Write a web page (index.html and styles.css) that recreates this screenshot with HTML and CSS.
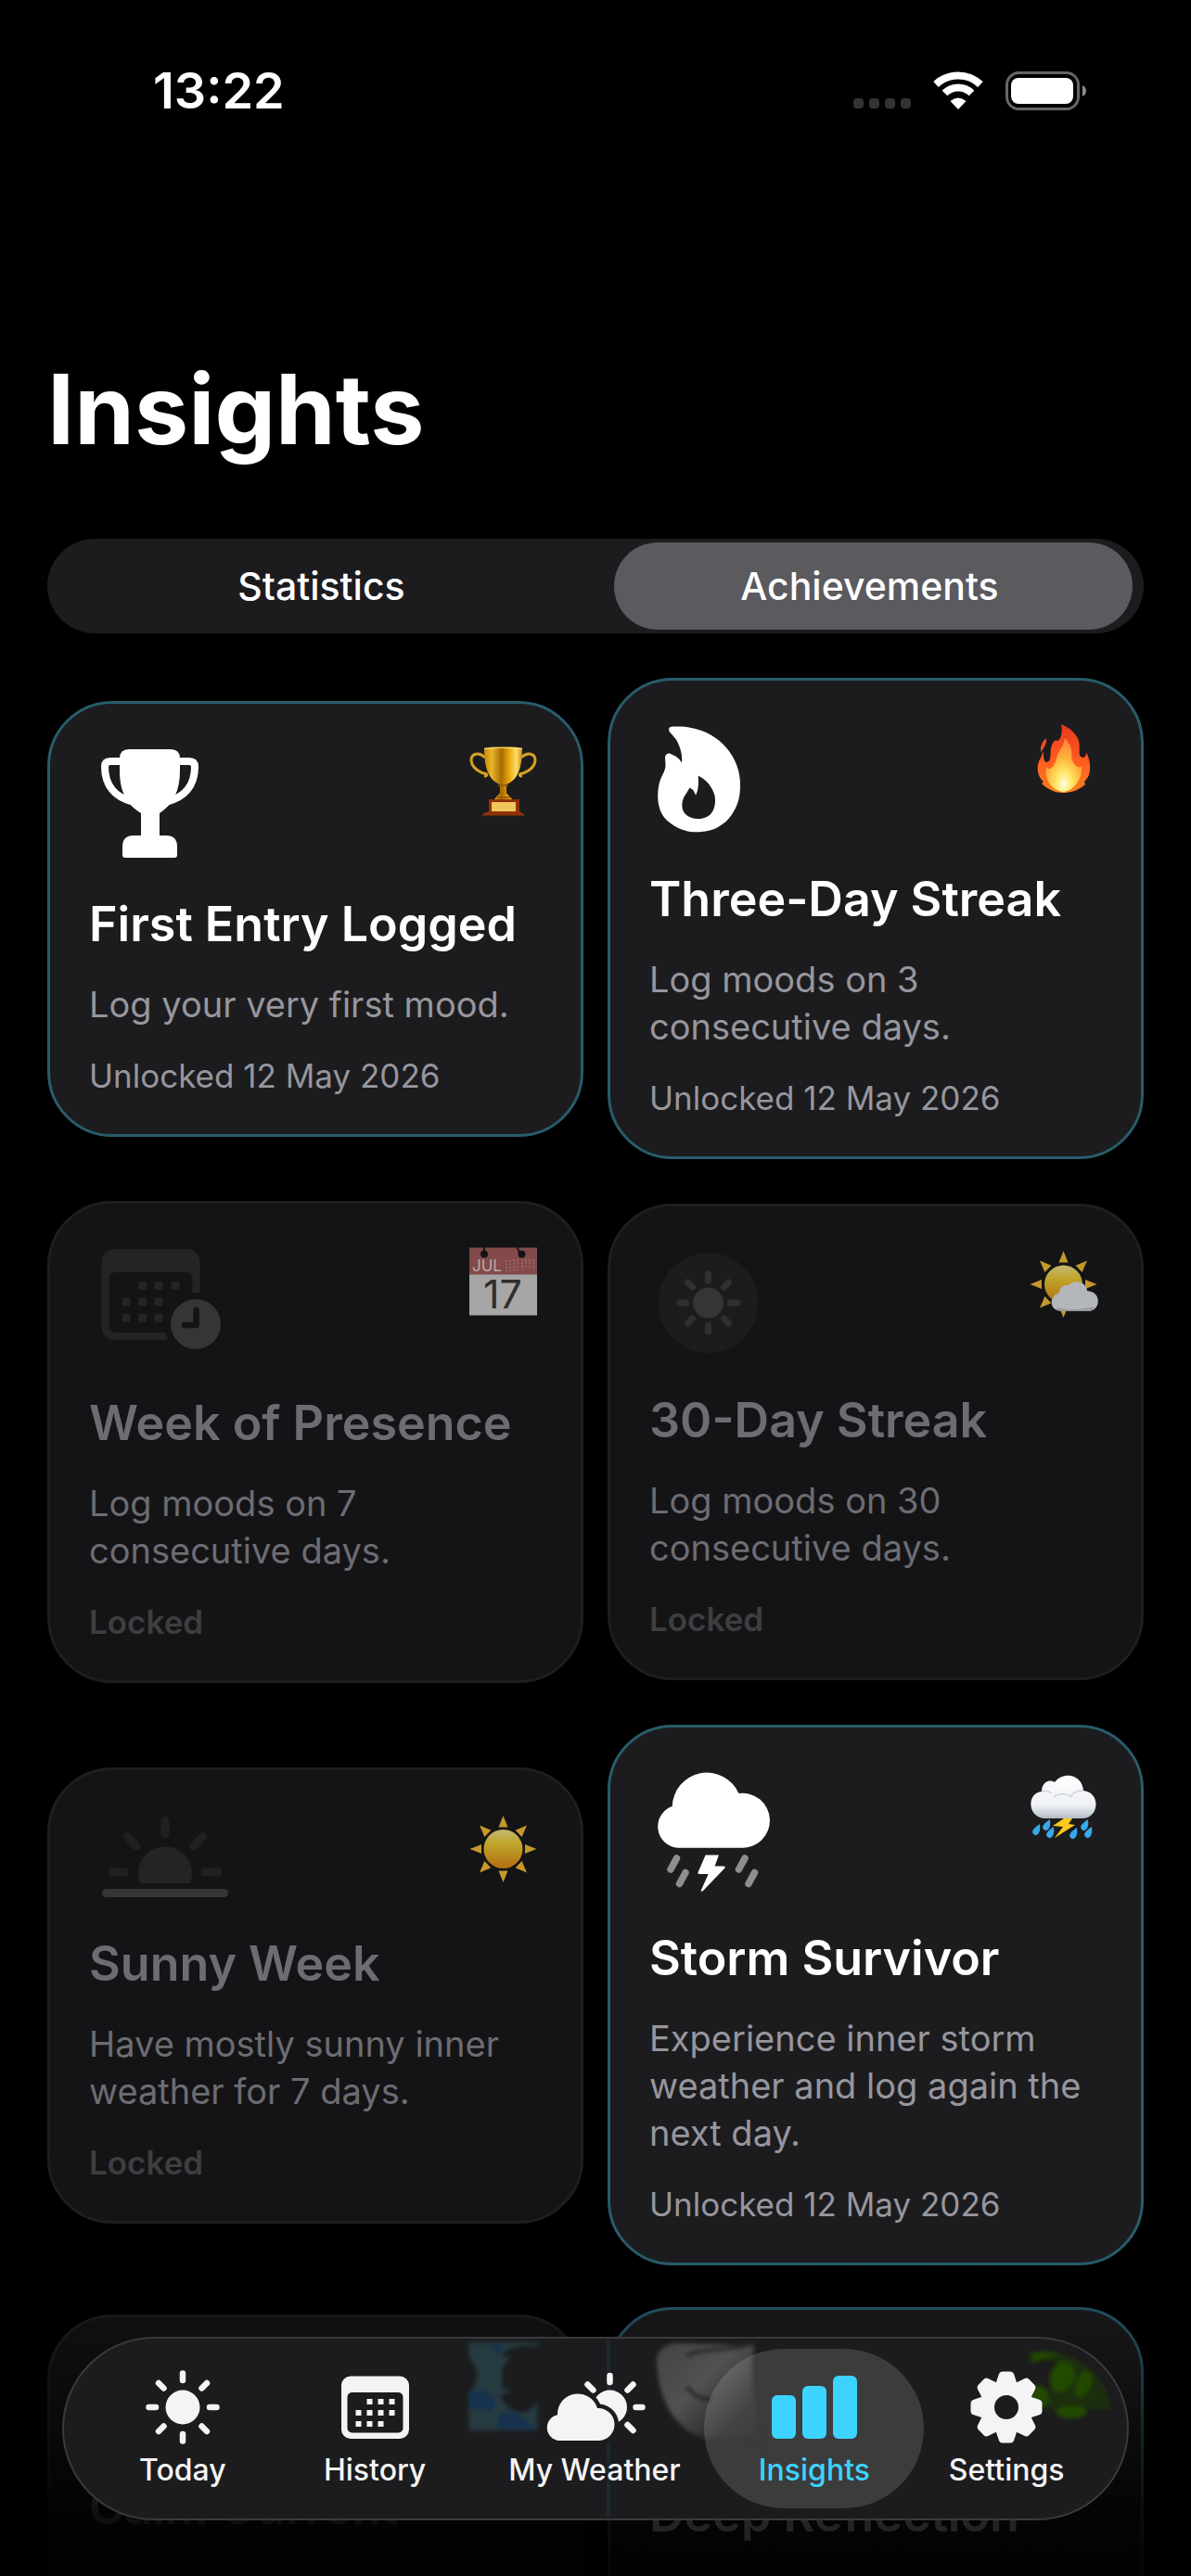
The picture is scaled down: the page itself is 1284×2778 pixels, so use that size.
FILE: index.html
```html
<!DOCTYPE html>
<html lang="en">
<head>
<meta charset="utf-8">
<meta name="viewport" content="width=device-width, initial-scale=1">
<title>Insights</title>
<link rel="stylesheet" href="styles.css">
</head>
<body>
<div class="app">
  <header class="status-bar">
    <time class="clock">13:22</time>
    <div class="status-icons">
      <svg width="62" height="42" viewBox="0 0 62 42" fill="#333"><rect x="0" y="29" width="11" height="11" rx="4"/><rect x="17" y="29" width="11" height="11" rx="4"/><rect x="34" y="29" width="11" height="11" rx="4"/><rect x="51" y="29" width="11" height="11" rx="4"/></svg>
      <svg width="54" height="42" viewBox="0 0 54 42"><path d="M3 14A35 35 0 0 1 51 14" fill="none" stroke="#fff" stroke-width="8"/><path d="M12.500 23.500A20.500 20.500 0 0 1 41.500 23.500" fill="none" stroke="#fff" stroke-width="8"/><path d="M27 41 18.500 32Q27 25 35.500 32Z" fill="#fff"/></svg>
      <svg width="88" height="42" viewBox="0 0 88 42"><rect x="1.500" y="1.500" width="77" height="39" rx="13" fill="none" stroke="#666" stroke-width="3"/><rect x="6" y="7" width="67" height="28" rx="8" fill="#fff"/><path d="M83 15Q87 17 87 21T83 27Z" fill="#8a8a8a"/></svg>
    </div>
  </header>

  <main class="content">
    <h1 class="page-title">Insights</h1>

    <div class="segmented" role="group" aria-label="Insights view">
      <button class="segment" type="button" aria-pressed="false">Statistics</button>
      <button class="segment segment-selected" type="button" aria-pressed="true">Achievements</button>
    </div>

    <section class="card-grid" aria-label="Achievements">
      <article class="card card-unlocked">
        <div class="card-top">
          <svg width="131" height="134" viewBox="0 0 131 134"><path fill="#fff" d="M33 17Q33 7 43 7H88Q98 7 98 17V30C98 52 91 66 76 76V100H83Q95 100 95 112V121Q95 124 92 124H39Q36 124 36 121V112Q36 100 48 100H56V76C40 66 33 52 33 30Z"/><path fill="none" stroke="#fff" stroke-width="8" d="M36 20H23Q17 20 17 26C17 47 29 59 47 63.500M95 20H108Q114 20 114 26C114 47 102 59 84 63.500"/></svg>
          <svg width="80" height="80" viewBox="0 0 80 80">
            <defs><linearGradient id="gold"><stop offset="0" stop-color="#c98a08"/><stop offset=".2" stop-color="#e9b62a"/><stop offset=".45" stop-color="#a86a04"/><stop offset=".65" stop-color="#e8a50c"/><stop offset=".85" stop-color="#ffe06b"/><stop offset="1" stop-color="#c38c12"/></linearGradient></defs>
            <path d="M19 16C12 9 4 12 4 19 5 29 16 33 20 33.500Q22 36 18 36M58 16C65 9 73 12 73 19 72 29 61 33 57 33.500Q55 36 59 36" fill="none" stroke="#d6a21f" stroke-width="3"/>
            <path d="M18 5.500Q38.500 3 59 5.500C59 28 54 40 42 45V54L49 62H28L35 54V45C23 40 18 28 18 5.500Z" fill="url(#gold)"/><path d="M18 6.500Q38.500 4 59 6.500" stroke="#ffe28a" fill="none"/><path d="M33 46H44M32 59H46" stroke="#8c5603" stroke-width="1.500"/>
            <path d="M23 61H56V74L61 77V78.500H16V77L23 74Z" fill="#8e3206"/><rect x="26" y="64" width="26" height="10" fill="#f0c65c"/>
          </svg>
        </div>
        <h2 class="card-title">First Entry Logged</h2>
        <p class="card-text">Log your very first mood.</p>
        <p class="card-status">Unlocked 12 May 2026</p>
      </article>

      <article class="card card-unlocked">
        <div class="card-top">
          <svg width="110" height="132" viewBox="0 0 110 132"><path fill="#fff" fill-rule="evenodd" d="M27 7.500C38 7 50 9 59 13 71 18 80 26 86 34 94 45 98 57 98 71 98 82 96 91 91 99 86 108 79 114 70 118 57 123 39 123 26 114 18 109 13 103 11 95.500 8 85 9 73 12 64.500 15 58 17.500 54 17.500 49L17 41C17 37 21 35.500 24 37.500 30 40 32 42 35 46.600 36 37 33 29 29 21.500L21.700 13C20 9 22 7 27 7.500ZM52.700 60.400C59 64 63 67 66.500 73 70 79 71 82 71 87 71 94 69 99 65.700 102.400 59 108.500 46 109 39 102 34 97 34 87 39.700 80L43.500 73.500 47.300 76 50 81.500C52.500 77 53.500 71 52.700 60.400Z"/></svg>
          <svg width="80" height="80" viewBox="0 0 80 80">
            <defs><linearGradient id="fire" x1="0" y1="0" x2="0" y2="1"><stop offset="0" stop-color="#e8371c"/><stop offset=".5" stop-color="#ff5a20"/><stop offset="1" stop-color="#f5801f"/></linearGradient><radialGradient id="ember" cx=".5" cy=".85" r=".75"><stop offset="0" stop-color="#fffde0"/><stop offset=".3" stop-color="#ffe765"/><stop offset=".65" stop-color="#ffb23b"/><stop offset="1" stop-color="#ff8a3a"/></radialGradient></defs>
            <path fill="url(#fire)" d="M36 5C45 9 52 14 55 23 57 31 54 36 57 40 61 43 63 39 63 35.500 67 42 69 54 65 62L61 67 62 70C54 77 45 79 38 79 31 79 22 76 15 69L17 67C11 62 9 53 12 45 14 41 16 38 16 34 18 38 16 45 20 46 26 46 24 37 25 31 27 23 30 21 32 23 36 22 38 12 36 5ZM20 20Q21 27 14 35 13 25 20 20Z"/>
            <path fill="url(#ember)" d="M40 20C47 28 48 34 47 40 49 51 55 52 58 51 59 63 51 76 39 78 26 77 18 65 20 52 27 56 30 46 32 38 34 33 39 28 40 20Z"/>
          </svg>
        </div>
        <h2 class="card-title">Three-Day Streak</h2>
        <p class="card-text">Log moods on 3 consecutive days.</p>
        <p class="card-status">Unlocked 12 May 2026</p>
      </article>

      <article class="card card-locked">
        <div class="card-top">
          <svg width="146" height="133" viewBox="0 0 146 133"><rect x="13.500" y="7" width="106" height="98" rx="14" fill="#242427"/><rect x="21.500" y="32" width="90" height="65" rx="7" fill="#141416"/><g fill="#242427"><rect x="53" y="42" width="9" height="9" rx="2"/><rect x="70.500" y="42" width="9" height="9" rx="2"/><rect x="88.500" y="42" width="9" height="9" rx="2"/><rect x="35.500" y="59.500" width="9" height="9" rx="2"/><rect x="53" y="59.500" width="9" height="9" rx="2"/><rect x="70.500" y="59.500" width="9" height="9" rx="2"/><rect x="35.500" y="77" width="9" height="9" rx="2"/><rect x="53" y="77" width="9" height="9" rx="2"/><rect x="70.500" y="77" width="9" height="9" rx="2"/></g><circle cx="115" cy="88" r="34" fill="#141416"/><circle cx="115" cy="88" r="27" fill="#353538"/><path d="M115.500 73V89H103" fill="none" stroke="#141416" stroke-width="6.500" stroke-linecap="round" stroke-linejoin="round"/></svg>
          <svg width="80" height="80" viewBox="0 0 80 80"><rect x="2" y="34" width="73" height="44.500" fill="#a6a6a6"/><rect x="2" y="5.500" width="73" height="29" fill="#824a4a"/><path d="M42 19V31M46 19V31M50 18V31M54 18V30M59 18V30M63 18V28M67 18V28M71 18V28" stroke="#9a6464" stroke-width="2" stroke-dasharray="2 1.500"/><circle cx="18" cy="12.500" r="4" fill="#141416"/><circle cx="58.500" cy="12.500" r="4" fill="#141416"/><path d="M18 5V11M54 5Q54 9 58 11" stroke="#141416" stroke-width="2" fill="none"/><text x="5" y="30.500" font-size="17" fill="#bca9a9">JUL</text><text x="17" y="71" font-size="43" fill="#2f2f30">17</text></svg>
        </div>
        <h2 class="card-title">Week of Presence</h2>
        <p class="card-text">Log moods on 7 consecutive days.</p>
        <p class="card-status">Locked</p>
      </article>

      <article class="card card-locked">
        <div class="card-top">
          <svg width="128" height="127" viewBox="0 0 128 127"><circle cx="63.500" cy="62" r="54" fill="#1c1c1e"/><circle cx="63.500" cy="62" r="16.500" fill="#353538"/><g stroke="#303033" stroke-width="7" stroke-linecap="round"><path d="M63.500 31V38M63.500 86V93M32.500 62H39.500M87.500 62H94.500M41.500 40L46.500 45M80.500 79L85.500 84M41.500 84L46.500 79M80.500 45L85.500 40"/></g></svg>
          <svg width="80" height="80" viewBox="0 0 80 80">
            <defs><linearGradient id="dimsun" x1="0" y1="0" x2="0" y2="1"><stop offset="0" stop-color="#c4b873"/><stop offset=".35" stop-color="#c0a62b"/><stop offset="1" stop-color="#b36e12"/></linearGradient></defs>
            <g id="rays" fill="#c4982a"><path id="ray" d="M38.500 6 43.500 18.500H33.500Z"/><use href="#ray" transform="rotate(45 38.500 42)"/><use href="#ray" transform="rotate(90 38.500 42)"/><use href="#ray" transform="rotate(135 38.500 42)"/><use href="#ray" transform="rotate(180 38.500 42)"/><use href="#ray" transform="rotate(225 38.500 42)"/><use href="#ray" transform="rotate(270 38.500 42)"/><use href="#ray" transform="rotate(315 38.500 42)"/></g>
            <circle cx="38.500" cy="42" r="20.500" fill="url(#dimsun)"/><path fill="#b3b6ba" d="M37 71C23 71 22 55 34 51 34 45 40 42 44 43 51 36 63 39 64 49 80 50 79 70 66 71Z"/><path fill="#989ca2" d="M30 67Q50 72 72 66 70 71 66 71H37Q33 71 30 67Z"/>
          </svg>
        </div>
        <h2 class="card-title">30-Day Streak</h2>
        <p class="card-text">Log moods on 30 consecutive days.</p>
        <p class="card-status">Locked</p>
      </article>

      <article class="card card-locked">
        <div class="card-top">
          <svg width="164" height="105" viewBox="0 0 164 105"><path d="M55 80A29 29 0 1 1 109 80Z" fill="#242427"/><g stroke="#202022" stroke-width="9" stroke-linecap="round"><path d="M82 12.500V26M41.500 29.500L51 40M122.500 29.500L113 40M25 68H39M125 68H139"/></g><path d="M18.500 90.500H145.500" stroke="#353538" stroke-width="9" stroke-linecap="round"/></svg>
          <svg width="80" height="80" viewBox="0 0 80 80"><use href="#rays" y="1"/><circle cx="38.500" cy="43" r="21" fill="url(#dimsun)"/></svg>
        </div>
        <h2 class="card-title">Sunny Week</h2>
        <p class="card-text">Have mostly sunny inner weather for 7 days.</p>
        <p class="card-status">Locked</p>
      </article>

      <article class="card card-unlocked">
        <div class="card-top">
          <svg width="140" height="145" viewBox="2 0 140 145"><path fill="#fff" d="M33 87.700A23 23 0 0 1 26.700 43 37.500 37.500 0 0 1 98.500 29 29.500 29.500 0 1 1 101 87.700ZM62.600 95.600H77L72.600 107.500H82Q85 108 83 110L60 134Q57 136 58 133L65.700 116H56Q54 116 54.600 114Z"/><g stroke="#8e8e8f" stroke-width="7.500" stroke-linecap="round"><path d="M31.500 99 25 111M41 114.500 34.500 126.500M105 99 98.500 111M115.500 114.500 109 126.500"/></g></svg>
          <svg width="80" height="80" viewBox="0 0 80 80">
            <defs><linearGradient id="cloud" x1="0" y1="0" x2="0" y2="1"><stop offset="0" stop-color="#fff"/><stop offset=".7" stop-color="#eef0f3"/><stop offset="1" stop-color="#b3bcc6"/></linearGradient></defs>
            <path fill="url(#cloud)" d="M18 56C-1 55-1 28 15 27 15 17 23 13 29 17 39 4 59 9 60 26 79 28 77 55 60 56Z"/><path d="M15 27Q21 25 25 29M60 26Q51 26 47 31M28 33Q37 26 48 33" stroke="#cdd3da" stroke-width="1.500" fill="none"/>
            <path fill="#ffc91f" d="M39 56H48L44 62 51 63 29 77 38 65 27 64Z"/>
            <g fill="#38a9ec"><path id="drop" d="M13 62Q5 67 5 71 7 76 11 73 14 70 13 62Z"/><use href="#drop" x="11" y="-5"/><use href="#drop" x="15" y="3"/><use href="#drop" x="40" y="4"/><use href="#drop" x="52" y="-5"/><use href="#drop" x="56" y="3"/></g>
          </svg>
        </div>
        <h2 class="card-title">Storm Survivor</h2>
        <p class="card-text">Experience inner storm weather and log again the next day.</p>
        <p class="card-status">Unlocked 12 May 2026</p>
      </article>

      <article class="card card-locked card-peek">
        <div class="card-top"><svg width="140" height="101" viewBox="0 0 140 101"></svg></div>
        <h2 class="card-title">Calm Current</h2>
      </article>

      <article class="card card-unlocked card-peek">
        <div class="card-top"><svg width="140" height="117" viewBox="0 0 140 117"></svg></div>
        <h2 class="card-title">Deep Reflection</h2>
      </article>
    </section>
  </main>

  <div class="bottom-fade"></div>

  <nav class="tab-bar" aria-label="Main">
    <svg class="tab-glass" viewBox="0 0 1150 198" preserveAspectRatio="none" aria-hidden="true">
      <defs><linearGradient id="mask" x1="0" y1="0" x2="1" y2="1"><stop offset="0" stop-color="#424243"/><stop offset=".4" stop-color="#525253"/><stop offset=".7" stop-color="#29292b"/><stop offset=".9" stop-color="#1c1c1e"/></linearGradient><filter id="soft"><feGaussianBlur stdDeviation="2"/></filter></defs>
      <path d="M589 2V196" stroke="#1b2a30" stroke-width="4"/>
      <g filter="url(#soft)">
        <path d="M438 4H512V9C488 6 476 12 474 20L484 20 474 32V54L484 58 472 62C478 78 492 84 502 80L512 70V101H438V60Q456 40 438 20Z" fill="#253b41"/><path d="M438 60 452 56 468 68 462 80 438 76ZM460 6H476L470 18ZM470 84Q484 76 500 90L512 100H470Z" fill="#173150"/>
        <path d="M641 22Q644 6 664 5L747 8C743 28 742 50 752 90L756 124C735 100 716 112 690 109 660 99 642 66 641 22Z" fill="url(#mask)"/>
        <path d="M674 20C684 8 720 16 745 5M674 53Q682 66 700 67" fill="none" stroke="#29292a" stroke-width="5"/>
        <path d="M1046 16C1086 8 1128 34 1133 78L1108 78Q1104 87 1090 88 1074 84 1066 76 1046 80 1043 52 1056 50 1068 66 1064 40 1074 26 1060 22 1046 27Z" fill="#1c2e10"/>
        <g fill="#214a02"><path d="M1046 16Q1062 12 1078 17L1062 22 1046 26Z"/><ellipse cx="1080" cy="42" rx="13" ry="17" transform="rotate(20 1080 42)"/><ellipse cx="1103" cy="50" rx="8" ry="15" transform="rotate(20 1103 50)"/><ellipse cx="1055" cy="64" rx="11" ry="12"/><ellipse cx="1090" cy="81" rx="16" ry="7"/></g>
      </g>
    </svg>
    <a class="tab" href="#today">
      <svg width="82" height="82" viewBox="-41 -41 82 82" fill="#f4f4f6" stroke="#f4f4f6"><circle r="18.500" stroke="none"/><g stroke-width="6.500" stroke-linecap="round"><path d="M0-36.500V-29M0 36.500V29M-36.500 0H-29M36.500 0H29M-26-26-20.500-20.500M26 26 20.500 20.500M-26 26-20.500 20.500M26-26 20.500-20.500"/></g></svg>
      <span>Today</span>
    </a>
    <a class="tab" href="#history">
      <svg width="82" height="82" viewBox="0 0 82 82"><rect x="5" y="7.500" width="73" height="67.500" rx="10" fill="#f4f4f6"/><rect x="11.500" y="25" width="60" height="43.500" rx="5" fill="#1c1c1e"/><g fill="#f4f4f6"><path d="M32.500 32h6v6h-6zM44.500 32h6v6h-6zM56.500 32h6v6h-6zM20.500 44h6v6h-6zM32.500 44h6v6h-6zM44.500 44h6v6h-6zM56.500 44h6v6h-6zM20.500 56h6v6h-6zM32.500 56h6v6h-6zM44.500 56h6v6h-6z"/></g></svg>
      <span>History</span>
    </a>
    <a class="tab" href="#my-weather">
      <svg width="112" height="82" viewBox="0 0 112 82"><circle cx="72.500" cy="41" r="18.500" fill="#f4f4f6"/><g stroke="#f4f4f6" stroke-width="6.500" stroke-linecap="round"><path d="M72.500 7V14M100.500 41H107.500M91.500 22.500 97.500 16.500M91.500 60 97.500 66M54.500 22.500 48.500 16.500"/></g><path stroke="#1c1c1e" stroke-width="9" stroke-linejoin="round" fill="#1c1c1e" d="M18 77A14 14 0 0 1 16 49.300 22 22 0 0 1 59 42 17.500 17.500 0 0 1 61 77Z"/><path fill="#f4f4f6" d="M18 77A14 14 0 0 1 16 49.300 22 22 0 0 1 59 42 17.500 17.500 0 0 1 61 77Z"/></svg>
      <span>My Weather</span>
    </a>
    <a class="tab tab-selected" href="#insights" aria-current="page">
      <svg width="92" height="82" viewBox="0 0 92 82" fill="#3dd3ff"><rect y="28" width="26" height="47" rx="6"/><rect x="33" y="18" width="26" height="57" rx="6"/><rect x="66" y="7" width="26" height="68" rx="6"/></svg>
      <span>Insights</span>
    </a>
    <a class="tab" href="#settings">
      <svg width="82" height="82" viewBox="-41 -41 82 82" fill="#f4f4f6"><defs><path id="tooth" d="M-12-24-8-36Q-7-38.500-4.500-38.500H4.500Q7-38.500 8-36L12-24Z"/></defs><path fill-rule="evenodd" d="M0-29A29 29 0 1 1 0 29 29 29 0 1 1 0-29ZM0-13A13 13 0 1 0 0 13 13 13 0 1 0 0-13Z"/><use href="#tooth"/><use href="#tooth" transform="rotate(45)"/><use href="#tooth" transform="rotate(90)"/><use href="#tooth" transform="rotate(135)"/><use href="#tooth" transform="rotate(180)"/><use href="#tooth" transform="rotate(225)"/><use href="#tooth" transform="rotate(270)"/><use href="#tooth" transform="rotate(315)"/></svg>
      <span>Settings</span>
    </a>
  </nav>
</div>
</body>
</html>
```
FILE: styles.css
```css
* {
  box-sizing: border-box;
}

body {
  margin: 0;
  background: #000;
  color: #fff;
  font-family: Inter, "Liberation Sans", sans-serif;
}

h1, h2, p {
  margin: 0;
}

svg {
  display: block;
  flex: none;
}

.app {
  position: relative;
  display: flex;
  flex-direction: column;
  height: 100vh;
  overflow: hidden;
}

/* Status bar */
.status-bar {
  flex: none;
  display: flex;
  align-items: center;
  justify-content: space-between;
  height: 195px;
  padding: 0 112px 0 165px;
}

.clock {
  font-size: 54px;
  font-weight: 600;
}

.status-icons {
  display: flex;
  gap: 24px;
}

/* Page */
.content {
  flex: 1;
  min-height: 0;
  overflow-y: auto;
  scrollbar-width: none;
  padding: 182px 51px 0;
}

.page-title {
  font-size: 104px;
  line-height: 128px;
  font-weight: 700;
}

.segmented {
  display: grid;
  grid-template-columns: 1fr 1fr;
  height: 102px;
  margin-top: 76px;
  padding: 4px 0;
  border-radius: 51px;
  background: #1c1c1f;
}

.segment {
  border: 0;
  border-radius: 47px;
  background: none;
  color: #fff;
  font: inherit;
  font-size: 41px;
  font-weight: 500;
}

.segment-selected {
  margin: 0 12px 0 20px;
  padding: 0 8px 0 0;
  background: #5a5a5f;
}

/* Achievement cards */
.card-grid {
  display: grid;
  grid-template-columns: 1fr 1fr;
  align-items: center;
  gap: 45px 26px;
  margin-top: 48px;
}

.card {
  padding: 42px 42px 41px;
  border: 3px solid;
  border-radius: 70px;
}

.card-unlocked {
  border-color: #285c6b;
  background: #1c1c1e;
}

.card-locked {
  border-color: #1e1e20;
  background: #141416;
}

.card-peek {
  padding-bottom: 360px;
}

.card-top {
  display: flex;
  align-items: flex-start;
  justify-content: space-between;
  margin-bottom: 30px;
}

.card-title {
  font-size: 52px;
  line-height: 64px;
  font-weight: 600;
}

.card-text {
  margin-top: 29px;
  color: #97969e;
  font-size: 38px;
  line-height: 51px;
}

.card-status {
  margin-top: 29px;
  color: #97969e;
  font-size: 35px;
  line-height: 44px;
}

.card-locked .card-title,
.card-locked .card-text {
  color: #6d6c73;
}

.card-locked .card-status {
  color: #3e3e41;
  font-weight: 600;
}

/* Tab bar floating over the list */
.bottom-fade {
  position: absolute;
  right: 0;
  bottom: 0;
  left: 0;
  height: 340px;
  background: linear-gradient(rgba(0, 0, 0, 0), rgba(0, 0, 0, 0.2) 20%, rgba(0, 0, 0, 0.85) 80%, rgba(0, 0, 0, 0.9));
  pointer-events: none;
}

.tab-bar {
  position: absolute;
  right: 67px;
  bottom: 60px;
  left: 67px;
  display: grid;
  grid-template-columns: 3fr 4fr 4fr 4fr 3fr;
  height: 198px;
  padding: 11px 41px 11px 39px;
  border: 2px solid #3a3a3c;
  border-radius: 99px;
  background: #1c1c1e;
  overflow: hidden;
}

.tab-glass {
  position: absolute;
  top: 0;
  left: 0;
  width: 100%;
  height: 100%;
}

.tab {
  position: relative;
  display: flex;
  flex-direction: column;
  align-items: center;
  padding-top: 22px;
  border-radius: 86px;
  color: #f4f4f6;
  font-size: 32px;
  line-height: 40px;
  font-weight: 500;
  text-decoration: none;
  white-space: nowrap;
}

.tab span {
  margin-top: 7px;
}

.tab-selected {
  background: rgba(255, 255, 255, 0.14);
  color: #3dd3ff;
}
```
